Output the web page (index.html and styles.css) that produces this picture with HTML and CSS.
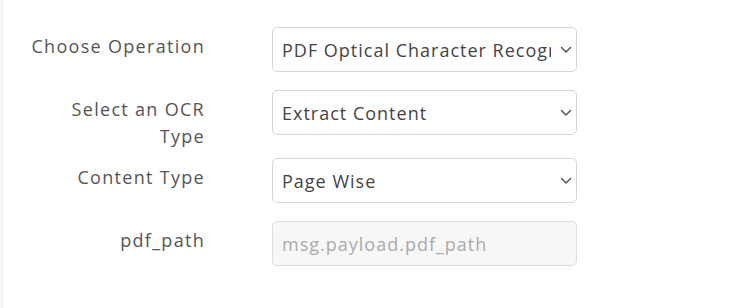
FILE: index.html
```html
<!doctype html>
<html lang="en">
<head>
<meta charset="utf-8">
<title>PDF OCR node</title>
<link rel="stylesheet" href="styles.css">
</head>
<body>

<div class="panel">
  <div class="row">
    <label class="label" for="operation">Choose Operation</label>
    <div class="field">
      <select id="operation">
        <option selected>PDF Optical Character Recognition</option>
      </select>
      <svg class="chevron" width="12" height="8" viewBox="0 0 12 8"><path d="M1.5 1.5 L6 6 L10.5 1.5" fill="none" stroke="#555" stroke-width="1.5" stroke-linecap="round" stroke-linejoin="round"/></svg>
    </div>
  </div>

  <div class="row">
    <label class="label" for="ocrType">Select an OCR Type</label>
    <div class="field">
      <select id="ocrType">
        <option selected>Extract Content</option>
      </select>
      <svg class="chevron" width="12" height="8" viewBox="0 0 12 8"><path d="M1.5 1.5 L6 6 L10.5 1.5" fill="none" stroke="#555" stroke-width="1.5" stroke-linecap="round" stroke-linejoin="round"/></svg>
    </div>
  </div>

  <div class="row">
    <label class="label" for="contentType">Content Type</label>
    <div class="field">
      <select id="contentType">
        <option selected>Page Wise</option>
      </select>
      <svg class="chevron" width="12" height="8" viewBox="0 0 12 8"><path d="M1.5 1.5 L6 6 L10.5 1.5" fill="none" stroke="#555" stroke-width="1.5" stroke-linecap="round" stroke-linejoin="round"/></svg>
    </div>
  </div>

  <div class="row">
    <label class="label" for="pdfPath">pdf_path</label>
    <div class="field">
      <input id="pdfPath" type="text" placeholder="msg.payload.pdf_path" disabled>
    </div>
  </div>
</div>

</body>
</html>
```

FILE: styles.css
```css
html, body {
  margin: 0;
  background: #fff;
}
body {
  font-family: "Open Sans", "DejaVu Sans", sans-serif;
  color: #555;
}
.panel {
  height: 308px;
  box-sizing: border-box;
  padding: 27px 0 0 24px;
  border-left: 4px solid #f6f6f6;
}
.row {
  display: flex;
  align-items: flex-start;
  margin-bottom: 18px;
}
.label {
  width: 177px;
  flex: none;
  text-align: right;
  font-size: 18px;
  letter-spacing: 1.3px;
  line-height: 27px;
  padding-top: 6px;
  margin-bottom: -10px;
  color: #555;
}
.field {
  position: relative;
  margin-left: 67px;
  width: 305px;
}
select, input {
  display: block;
  width: 100%;
  height: 45px;
  box-sizing: border-box;
  margin: 0;
  border: 1px solid #d6d6d6;
  border-radius: 5px;
  background: #fff;
  font-family: inherit;
  font-size: 18px;
  letter-spacing: 1px;
  color: #444;
  padding: 0 25px 0 9px;
  appearance: none;
  -webkit-appearance: none;
  outline: none;
}
input:disabled {
  background: #f7f7f7;
  border-color: #ddd;
}
input::placeholder {
  color: #aaa;
}
.chevron {
  position: absolute;
  right: 5px;
  top: 19px;
  pointer-events: none;
}
```
